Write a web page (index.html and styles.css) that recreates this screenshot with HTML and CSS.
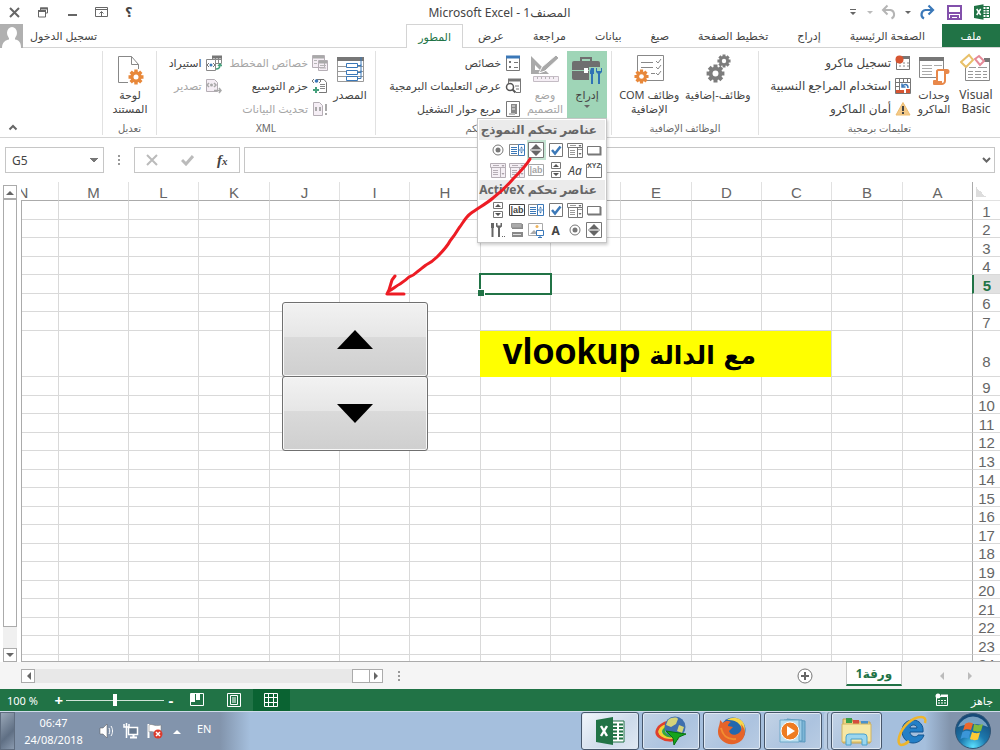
FILE: index.html
```
<!DOCTYPE html>
<html lang="ar" dir="rtl">

<head>
    <meta charset="utf-8">
    <title>المصنف1 - Microsoft Excel</title>
    <link rel="stylesheet" href="styles.css">
</head>

<body>
    <!-- shared icons for the controls menu -->
    <svg class="defs" width="0" height="0">
        <symbol id="i-button" viewBox="0 0 16 16"><path d="M1.500 4.500h13v8h-13z" fill="#fff" stroke="#777"/><path d="M2 12.500h12.500V5" fill="none" stroke="#777" stroke-width="2"/></symbol>
        <symbol id="i-combo" viewBox="0 0 16 16"><path d="M.5 1.500h15v4H.5zM1.500 5.500v10h9v-10M10.500 5.500h5v10h-5z" fill="#fff" stroke="#777"/><path d="M3 3.500h6M3 8.500h5M3 10.500h5M3 12.500h5M11 7.500h4" stroke="#999"/><path d="M11.500 3h3L13 5zM11.500 11h3L13 13z" fill="#666"/></symbol>
        <symbol id="i-check" viewBox="0 0 16 16"><path d="M1.500 1.500h13v13h-13z" fill="#fff" stroke="#777"/><path d="M4 8l3 3.500L12.500 4.500" fill="none" stroke="#3b78b8" stroke-width="2.500"/></symbol>
        <symbol id="i-spin" viewBox="0 0 16 16"><path d="M.500.500h15v15H.500zM2 8h12" fill="#fff" stroke="#777"/><path d="M3 7l5-5 5 5zM3 9l5 5 5-5z" fill="#666"/></symbol>
        <symbol id="i-list" viewBox="0 0 16 16"><path d="M.5 2.500h9v11h-9z" fill="#fff" stroke="#888"/><path d="M2 5.500h6M2 7.500h6M2 9.500h6M2 11.500h6" stroke="#3b78b8"/><path d="M9.500 2.500h6v11h-6zM10 8h5" fill="#fff" stroke="#3b78b8"/><path d="M11 6.500l1.500-2 1.500 2zM11 9.500l1.500 2 1.500-2z" fill="#3b78b8"/></symbol>
        <symbol id="i-radio" viewBox="0 0 16 16"><circle cx="8" cy="8" r="5" fill="#fff" stroke="#777"/><circle cx="8" cy="8" r="2.500" fill="#777"/></symbol>
        <symbol id="i-group" viewBox="0 0 16 16"><path d="M3 2.500H.5v13h15v-13H13" fill="none" stroke="#777"/><text x="8" y="6" font-size="7" font-weight="bold" text-anchor="middle" fill="#555">XYZ</text></symbol>
        <symbol id="i-scroll" viewBox="0 0 16 16"><path d="M3.500.5h9v6h-9zM3.500 9.500h9v6h-9z" fill="#fff" stroke="#777"/><path d="M5 5l3-3 3 3zM5 11l3 3 3-3z" fill="#555"/></symbol>
        <symbol id="i-text" viewBox="0 0 16 16"><path d="M.5 2.500h15v11H.5z" fill="#fff" stroke="currentColor"/><text x="8" y="11" font-size="9" font-weight="bold" text-anchor="middle" fill="currentColor">ab|</text></symbol>
        <symbol id="i-combo-off" viewBox="0 0 16 16"><path d="M.5 1.500h15v4H.5zM1.500 5.500v10h9v-10M10.500 5.500h5v10h-5z" fill="#f5f0f5" stroke="#b5aeb5"/><path d="M3 3.500h6M3 8.500h5M3 10.500h5M3 12.500h5" stroke="#b5aeb5"/><path d="M11.500 3h3L13 5zM11.500 11h3L13 13z" fill="#a8a0a8"/></symbol>
        <symbol id="i-toggle" viewBox="0 0 16 16"><path d="M3 2h11v5H3zM3 10h11v5H3z" fill="#888"/><path d="M2.500 1.500h10v4h-10z" fill="#aaa" stroke="#999"/><path d="M4 12.500h8" stroke="#ddd"/></symbol>
        <symbol id="i-image" viewBox="0 0 16 16"><path d="M.5 1.500h14v12H.5z" fill="#fff" stroke="#aaa"/><path d="M2 12l4-4 4 4z" fill="#aaa"/><circle cx="9" cy="4.500" r="1.500" fill="#efb45c"/><path d="M8.500 8.500h7v5h-7zM10 15.500h4M12 13v2" fill="#fff" stroke="#3b78b8"/></symbol>
        <symbol id="i-tools" viewBox="0 0 16 16"><path d="M1 1h3v5H3.500v9h-2V6H1z" fill="#666"/><path d="M6 1v3.500L8 6v9h2V6l2-1.500V1h-1.500v2.500h-3V1z" fill="#666"/><path d="M12 14.500h1M14 14.500h1" stroke="#666"/></symbol>
        <symbol id="i-gear" viewBox="0 0 16 16"><path d="M8 .5v15M.5 8h15M2.700 2.700l10.600 10.600M13.300 2.700L2.700 13.300" stroke="currentColor" stroke-width="3.400"/><circle cx="8" cy="8" r="5.700" fill="currentColor"/><circle cx="8" cy="8" r="2.500" fill="#fff"/></symbol>
    </svg>

    <header class="titlebar">
        <div class="quick">
            <button aria-label="Excel"><svg width="16" height="16" viewBox="0 0 16 16"><path d="M8.500 2.500h7v11h-7z" fill="#fff" stroke="#217346"/><path d="M9 5.500h6M9 8h6M9 10.500h6M12 3v10" stroke="#217346"/><path d="M0 2l9.500-1.800v15.600L0 14z" fill="#217346"/><path d="M2.700 5l4 6M6.700 5l-4 6" stroke="#fff" stroke-width="1.500"/></svg></button>
            <button aria-label="حفظ"><svg width="15" height="15" viewBox="0 0 15 15"><path d="M1 1h13v13H1z" fill="#fff" stroke="#8250ab" stroke-width="2"/><path d="M2 8h11M4 14v-3h7v3" fill="none" stroke="#8250ab" stroke-width="2"/></svg></button>
            <button aria-label="إعادة"><svg width="16" height="16" viewBox="0 0 16 16"><path d="M13 6H6.500a4.500 4.500 0 0 0-1.500 8.500" fill="none" stroke="#3b78b8" stroke-width="2.200"/><path d="M9.500 1.500L14 6l-4.500 4.500" fill="none" stroke="#3b78b8" stroke-width="2.200"/></svg></button>
            <span class="caret"></span>
            <button aria-label="تراجع"><svg width="16" height="16" viewBox="0 0 16 16"><path d="M3 6h6.500a4.500 4.500 0 0 1 1 8.500M6.500 1.500L2 6l4.500 4.500" fill="none" stroke="#b5b5b5" stroke-width="2"/></svg></button>
            <span class="caret off"></span>
            <svg class="more" width="6" height="7" viewBox="0 0 6 7"><path d="M0 0h6v1H0zM0 3h6L3 6z" fill="#666"/></svg>
        </div>
        <h1>المصنف1 - Microsoft Excel</h1>
        <div class="window-buttons">
            <button aria-label="تعليمات">؟</button>
            <button aria-label="خيارات عرض الشريط"><svg width="13" height="11" viewBox="0 0 13 11"><path d="M.5.5h12v9H.5zM1 2.500h11M6.500 9V5M4.500 6.500l2-2 2 2" fill="none" stroke="#666"/></svg></button>
            <button aria-label="تصغير"><svg width="12" height="11" viewBox="0 0 12 11"><path d="M2 8h9" stroke="#666" stroke-width="2"/></svg></button>
            <button aria-label="استعادة"><svg width="12" height="11" viewBox="0 0 12 11"><path d="M3.500 3V1h7v5h-2M1.500 4h7v6h-7z" fill="none" stroke="#666"/><path d="M1 4h8M3 1.500h8" stroke="#666" stroke-width="2"/></svg></button>
            <button aria-label="إغلاق"><svg width="11" height="11" viewBox="0 0 11 11"><path d="M1 1l9 9M10 1l-9 9" stroke="#666" stroke-width="2"/></svg></button>
        </div>
    </header>

    <nav class="tabs">
        <a class="file" href="#">ملف</a>
        <a href="#">الصفحة الرئيسية</a>
        <a href="#">إدراج</a>
        <a href="#">تخطيط الصفحة</a>
        <a href="#">صيغ</a>
        <a href="#">بيانات</a>
        <a href="#">مراجعة</a>
        <a href="#">عرض</a>
        <a class="active" href="#">المطور</a>
        <a class="signin" href="#">تسجيل الدخول</a>
        <svg class="avatar" width="23" height="24" viewBox="0 0 23 24"><path d="M0 0h23v24H0z" fill="#b0b0b0"/><path d="M2 24c0-6 4-8 7-8.500L9 14h6v1.500c4 .5 6 3 6 8.500z" fill="#fff"/><ellipse cx="12" cy="9" rx="5" ry="6" fill="#fff"/></svg>
    </nav>

    <div class="ribbon">
        <section class="group code">
            <div class="tools">
                <button class="big"><svg width="32" height="32" viewBox="0 0 32 32"><path d="M5.500 11v16.500h24V6.500H26" fill="#fff" stroke="#888"/><path d="M24 5h6v4h-6z" fill="#777"/><path d="M9 14.500h7M18 14.500h9M8 18.500h5M15 18.500h6M23 18.500h4M8 21.500h5M15 21.500h6M23 21.500h4M8 24.500h5M15 24.500h6M23 24.500h4" stroke="#999"/><path d="M1 9l8-7 4 5-7 7z" fill="#fff" stroke="#e8c069" stroke-width="2"/><path d="M15 6l4-3 5 5-4 4z" fill="#fff" stroke="#e58a98" stroke-width="2"/></svg><span>Visual<br>Basic</span></button>
                <button class="big"><svg width="32" height="32" viewBox="0 0 32 32"><path d="M1.500 4.500h24v20h-24z" fill="#fff" stroke="#888"/><path d="M1 4h25v4H1z" fill="#777"/><path d="M4 12.500h10M16 12.500h8M4 15.500h10M4 18.500h10M4 21.500h10" stroke="#aaa"/><path d="M20 17h9c2 0 2 3 0 3h-2v8c0 2-2 3-3 3h-8v-3h3V18z" fill="#fff" stroke="#e8884a" stroke-width="2" stroke-linejoin="round"/><path d="M17 28h7v2h-7zM26 17h4v3h-4z" fill="#e8884a"/></svg><span>وحدات<br>الماكرو</span></button>
                <div class="stack">
                    <button><svg width="16" height="16" viewBox="0 0 16 16"><path d="M1.500 2.500h13v12h-13z" fill="#fff" stroke="#777"/><path d="M7 2.500h8" stroke="#777" stroke-width="3"/><path d="M4 8h2M8 8h2M12 8h2M4 11h2M8 11h2M12 11h2" stroke="#888"/><circle cx="4.500" cy="4.500" r="4" fill="#d65532"/></svg>تسجيل ماكرو</button>
                    <button><svg width="16" height="16" viewBox="0 0 16 16"><path d="M.5.5h15v15H.5zM.5 4.500h15M4.500 0v16M8.500 0v4M12.500 0v4M0 8.500h4M0 12.500h4" fill="#fff" stroke="#777"/><path d="M1 12h4v3H1zM11 11h4v4h-4zM5 12h4v3H5z" fill="#d65532"/><path d="M7 9c2-4 6-3 6 1M7 5.500V9h3.500" fill="none" stroke="#3b78b8" stroke-width="1.500"/></svg>استخدام المراجع النسبية</button>
                    <button><svg width="16" height="16" viewBox="0 0 16 16"><path d="M8 1.500L15 14H1z" fill="#f3c988" stroke="#eebd70"/><path d="M8 5v5M8 11v2" stroke="#444" stroke-width="2"/></svg>أمان الماكرو</button>
                </div>
            </div>
            <h2>تعليمات برمجية</h2>
        </section>

        <section class="group addins">
            <div class="tools">
                <button class="big"><svg width="32" height="32" viewBox="0 0 32 32" color="#7d7d7d"><use href="#i-gear" x="15" y="1" width="14" height="14"/><use href="#i-gear" x="4" y="11" width="19" height="19"/></svg><span>وظائف-إضافية</span></button>
                <button class="big"><svg width="32" height="32" viewBox="0 0 32 32" color="#e8883a"><path d="M4.500 2.500h26v25h-26z" fill="#fff" stroke="#888"/><path d="M8 9.500h12M8 14.500h12M18 20.500h4" stroke="#888"/><path d="M23 8l2 2 3-4M23 14l2 2 3-4M23 20l2 2 3-4" fill="none" stroke="#888"/><use href="#i-gear" x="1" y="16" width="15" height="15"/></svg><span>وظائف COM<br>الإضافية</span></button>
            </div>
            <h2>الوظائف الإضافية</h2>
        </section>

        <section class="group controls">
            <div class="tools">
                <div class="insert">
                    <button class="big open"><svg width="32" height="32" viewBox="0 0 32 32"><path d="M10 8V5h10v3" fill="none" stroke="#6f6f6f" stroke-width="2"/><rect x="1" y="8" width="28" height="19" rx="2" fill="#6f6f6f"/><path d="M1 17.500h28" stroke="#9fd5b7"/><path d="M13 15h4v5h-4z" fill="#fff"/><path d="M18 14h14v18H18z" fill="#9fd5b7"/><path d="M20 15h3v6h-1v10h-2V21h-1v-3z" fill="#2f72b5"/><path d="M25 15v4l2 2v10h2V21l2-2v-4h-1v3h-4v-3z" fill="#2f72b5"/></svg><span>إدراج</span><i class="caret"></i></button>
                    <div class="menu">
                        <h3>عناصر تحكم النموذج</h3>
                        <div class="icons">
                            <button aria-label="زر"><svg><use href="#i-button"/></svg></button>
                            <button aria-label="مربع تحرير وسرد"><svg><use href="#i-combo"/></svg></button>
                            <button aria-label="خانة اختيار"><svg><use href="#i-check"/></svg></button>
                            <button class="picked" aria-label="زر زيادة ونقصان"><svg><use href="#i-spin"/></svg></button>
                            <button aria-label="مربع قائمة"><svg><use href="#i-list"/></svg></button>
                            <button aria-label="زر خيار"><svg><use href="#i-radio"/></svg></button>
                            <button aria-label="مربع مجموعة"><svg><use href="#i-group"/></svg></button>
                            <button class="label" aria-label="تسمية">Aa</button>
                            <button aria-label="شريط تمرير"><svg><use href="#i-scroll"/></svg></button>
                            <button class="off" aria-label="حقل نص"><svg><use href="#i-text"/></svg></button>
                            <button aria-label="قائمة"><svg><use href="#i-combo-off"/></svg></button>
                            <button aria-label="قائمة منسدلة"><svg><use href="#i-combo-off"/></svg></button>
                        </div>
                        <h3>عناصر تحكم ActiveX</h3>
                        <div class="icons">
                            <button aria-label="زر أمر"><svg><use href="#i-button"/></svg></button>
                            <button aria-label="مربع تحرير وسرد"><svg><use href="#i-combo"/></svg></button>
                            <button aria-label="خانة اختيار"><svg><use href="#i-check"/></svg></button>
                            <button aria-label="مربع قائمة"><svg><use href="#i-list"/></svg></button>
                            <button aria-label="مربع نص"><svg><use href="#i-text"/></svg></button>
                            <button aria-label="شريط تمرير"><svg><use href="#i-scroll"/></svg></button>
                            <button aria-label="زر زيادة ونقصان"><svg><use href="#i-spin"/></svg></button>
                            <button aria-label="زر خيار"><svg><use href="#i-radio"/></svg></button>
                            <button class="letter" aria-label="تسمية">A</button>
                            <button aria-label="صورة"><svg><use href="#i-image"/></svg></button>
                            <button aria-label="زر تبديل"><svg><use href="#i-toggle"/></svg></button>
                            <button aria-label="المزيد"><svg><use href="#i-tools"/></svg></button>
                        </div>
                    </div>
                </div>
                <button class="big design off"><svg width="32" height="32" viewBox="0 0 32 32"><path d="M2 3v18h18zM6 12l5 5H6z" fill="#a9a9a9" fill-rule="evenodd"/><path d="M10 20l3-6L27 2l3 3-14 13z" fill="#a9a9a9" stroke="#fff"/><path d="M4.500 23.500h25v5h-25z" fill="#f5eef5" stroke="#c4bcc4"/><path d="M8.500 24v2M12.500 24v2M16.500 24v2M20.500 24v2M24.500 24v2" stroke="#b5b5b5"/></svg><span>وضع<br>التصميم</span></button>
                <div class="stack">
                    <button><svg width="16" height="16" viewBox="0 0 16 16"><path d="M1.500 1.500h13v14h-13z" fill="#fff" stroke="#777"/><path d="M1 2h14" stroke="#3b78b8" stroke-width="3"/><path d="M4 6h2v2H4zM4 11h2v2H4z" fill="#777"/><path d="M9 7.500h4M9 12.500h4" stroke="#777"/></svg>خصائص</button>
                    <button><svg width="16" height="16" viewBox="0 0 16 16"><path d="M3.500 5V1.500h12v13H11" fill="#fff" stroke="#777"/><path d="M3 2h13" stroke="#777" stroke-width="3"/><path d="M10 8h4M11 11h3" stroke="#777"/><circle cx="5" cy="9" r="3.500" fill="#fff" stroke="#555" stroke-width="1.500"/><path d="M7.500 11.500l3 3" stroke="#555" stroke-width="2"/></svg>عرض التعليمات البرمجية</button>
                    <button><svg width="16" height="16" viewBox="0 0 16 16"><path d="M1.500.5h13v15h-13z" fill="#fff" stroke="#777"/><path d="M6 3h6v10H6z" fill="#888"/><path d="M4 13h6M7 5h3M7 8h3" stroke="#bbb" stroke-width="2"/></svg>مربع حوار التشغيل</button>
                </div>
            </div>
            <h2>عناصر التحكم</h2>
        </section>

        <section class="group xml">
            <div class="tools">
                <button class="big"><svg width="32" height="32" viewBox="0 0 32 32"><path d="M3.500 4.500h26v24h-26zM3.500 13.500h26M3.500 18.500h26M3.500 23.500h26" fill="#fff" stroke="#999"/><path d="M3 4h27v4H3z" fill="#777"/><path d="M12.500 10.500h11v4h-11zM12.500 17.500h11v4h-11zM12.500 23.500h11v4h-11z" fill="#fff" stroke="#3b78b8"/><path d="M24 12.500h3V4M24 19.500h3v-8M24 25.500h3v-8" fill="none" stroke="#3b78b8"/></svg><span>المصدر</span></button>
                <div class="stack">
                    <button class="off"><svg width="16" height="16" viewBox="0 0 16 16"><path d="M.5.500h12v12H.5zM6.500 5.500h9v10h-9z" fill="#f5eef5" stroke="#b5aeb5"/><path d="M1 2h11M7 7h8" stroke="#a9a9a9" stroke-width="3"/><path d="M2 5.500h3M2 8.500h3M8 10.500h6M8 13h6" stroke="#b5b5b5"/></svg>خصائص المخطط</button>
                    <button><svg width="16" height="16" viewBox="0 0 16 16"><path d="M4.500 4V1.500H12l2.500 3v10H7" fill="#fff" stroke="#777"/><path d="M8 6.500h5M8 8.500h5M8 10.500h5" stroke="#888"/><path d="M2 1L0 3l2 2M7 1l2 2-2 2" fill="none" stroke="#777"/><circle cx="4.500" cy="3" r="1.800" fill="#3b78b8"/><path d="M4 9v6M1 12h6" stroke="#45a07c" stroke-width="2"/></svg>حزم التوسيع</button>
                    <button class="off"><svg width="16" height="16" viewBox="0 0 16 16"><path d="M1.500 1.500h6l3 3v10h-9z" fill="#f5eef5" stroke="#b5aeb5"/><path d="M3 6h2v4H3zM7 6h2v4H7z" fill="#a9a9a9"/><path d="M14 3v7M14 12v2" stroke="#a9a9a9" stroke-width="2"/></svg>تحديث البيانات</button>
                </div>
                <div class="stack">
                    <button><svg width="16" height="16" viewBox="0 0 16 16"><path d="M6.500 1.500h9v7h-9zM7 4.500h8M9.500 2v6M12.500 2v6" fill="#fff" stroke="#888"/><path d="M6 2h10" stroke="#777" stroke-width="3"/><path d="M.5 4.500h9v11h-9z" fill="#fff" stroke="#888"/><path d="M3 8l-2 2 2 2M7 8l2 2-2 2" fill="none" stroke="#777"/><circle cx="5" cy="10" r="1.500" fill="#3b78b8"/><path d="M10 14c3 0 4-1 4-4M12 11l2-2 2 2" fill="none" stroke="#45a07c" stroke-width="1.500"/></svg>استيراد</button>
                    <button class="off"><svg width="16" height="16" viewBox="0 0 16 16"><path d="M.5 1.500h8l3 3v9H.5z" fill="#f5eef5" stroke="#b5aeb5"/><path d="M3 5L1 7l2 2M8 5l2 2-2 2M8 12.500h7M13 10l2 2.500-2 2.500" fill="none" stroke="#a9a9a9" stroke-width="1.500"/><circle cx="5.500" cy="7" r="1.500" fill="#a9a9a9"/></svg>تصدير</button>
                </div>
            </div>
            <h2>XML</h2>
        </section>

        <section class="group modify">
            <div class="tools">
                <button class="big"><svg width="32" height="32" viewBox="0 0 32 32" color="#e8883a"><path d="M4.500 3.500h13l7 8v18h-20z" fill="#fff"/><path d="M14 29.500H4.500v-26h13l7 8V16M17.500 3.500v8h7" fill="none" stroke="#888"/><use href="#i-gear" x="14" y="16" width="16" height="16"/></svg><span>لوحة<br>المستند</span></button>
            </div>
            <h2>تعديل</h2>
        </section>

        <button class="collapse" aria-label="طي الشريط"><svg width="10" height="7" viewBox="0 0 10 7"><path d="M1.500 5.500L5 2l3.500 3.500" fill="none" stroke="#666" stroke-width="2"/></svg></button>
    </div>

    <div class="formula-bar" dir="ltr">
        <select class="name-box" aria-label="مربع الاسم">
            <option>G5</option>
        </select>
        <span class="dots"></span>
        <div class="fx">
            <button aria-label="إلغاء"><svg width="12" height="12" viewBox="0 0 12 12"><path d="M1 1l10 10M11 1L1 11" stroke="#bbb" stroke-width="2"/></svg></button>
            <button aria-label="إدخال"><svg width="13" height="12" viewBox="0 0 13 12"><path d="M1 6l4 4 7-8" fill="none" stroke="#bbb" stroke-width="3"/></svg></button>
            <button class="fn" aria-label="إدراج دالة">f<small>x</small></button>
        </div>
        <div class="formula">
            <input type="text" aria-label="شريط الصيغة">
            <svg width="9" height="7" viewBox="0 0 9 7"><path d="M1 1l3.500 3.500L8 1" fill="none" stroke="#666" stroke-width="2"/></svg>
        </div>
    </div>

    <main class="sheet">
        <div class="cells">
            <table id="grid"></table>
            <div class="spinner">
                <button aria-label="زيادة"><svg width="36" height="19" viewBox="0 0 36 19"><path d="M0 19L18 0l18 19z"/></svg></button>
                <button aria-label="إنقاص"><svg width="36" height="19" viewBox="0 0 36 19"><path d="M0 0l18 19L36 0z"/></svg></button>
            </div>
        </div>
        <div class="vscroll">
            <button aria-label="لأعلى"><svg width="8" height="5" viewBox="0 0 8 5"><path d="M0 5l4-4 4 4z" fill="#666"/></svg></button>
            <div class="thumb"></div>
            <div class="track"></div>
            <button aria-label="لأسفل"><svg width="8" height="5" viewBox="0 0 8 5"><path d="M0 0l4 4 4-4z" fill="#666"/></svg></button>
        </div>
        <!-- hand-drawn arrow from the spin button icon -->
        <svg class="pointer" width="150" height="142" viewBox="0 0 150 142" fill="none" stroke="#ed1c24" stroke-width="3" stroke-linecap="round" stroke-linejoin="round"><path d="M146 2c-4 7-10 13-17 20-6 7-12 13-20 19-7 6-15 10-23 16-5 4-7 9-11 14-3 5-5 8-9 13-3 6-8 11-13 16-4 4-7 6-11 8-4 3-6 5-9 7-3 3-4 4-8 5-3 3-6 5-9 7-4 2-7 5-11 7M11 119l-3 4-3 10-2 4h17"/></svg>
    </main>

    <div class="sheet-bar">
        <div class="sheet-nav"><span class="next"></span><span class="prev"></span></div>
        <a class="sheet-tab" href="#">ورقة1</a>
        <button class="add" aria-label="ورقة جديدة"><svg width="16" height="16" viewBox="0 0 16 16"><circle cx="8" cy="8" r="7" fill="#fff" stroke="#777"/><path d="M8 4v8M4 8h8" stroke="#666" stroke-width="2"/></svg></button>
        <span class="dots"></span>
        <div class="hscroll">
            <button aria-label="يمين"><svg width="5" height="8" viewBox="0 0 5 8"><path d="M0 0l4 4-4 4z" fill="#666"/></svg></button>
            <div class="thumb"></div>
            <div class="track"></div>
            <button aria-label="يسار"><svg width="5" height="8" viewBox="0 0 5 8"><path d="M5 0L1 4l4 4z" fill="#666"/></svg></button>
        </div>
    </div>

    <footer class="status">
        <span class="ready">جاهز</span>
        <svg width="14" height="14" viewBox="0 0 14 14"><path d="M1.500 3.500h11v9h-11z" fill="none" stroke="#fff"/><path d="M6 2.500h7" stroke="#fff" stroke-width="2"/><path d="M3 7.500h8M3 10h8" stroke="#fff" stroke-dasharray="2 1"/><circle cx="3" cy="3" r="2.500" fill="#fff"/></svg>
        <div class="views">
            <button class="on" aria-label="عادي"><svg width="14" height="14" viewBox="0 0 14 14"><path d="M.5.5h13v13H.5zM0 4.500h14M0 9.500h14M4.500 0v14M9.500 0v14" fill="none" stroke="#fff"/></svg></button>
            <button aria-label="تخطيط الصفحة"><svg width="14" height="14" viewBox="0 0 14 14"><path d="M.5.500h13v13H.5zM3.500 2.500h7v9h-7zM5 5h4M5 7h4M5 9h4" fill="none" stroke="#fff"/></svg></button>
            <button aria-label="معاينة فواصل الصفحات"><svg width="14" height="14" viewBox="0 0 14 14"><path d="M.5.500h13v12H.5z" fill="none" stroke="#fff"/><path d="M1 1h4v8H1zM6 1h4v6H6z" fill="#fff"/></svg></button>
        </div>
        <div class="zoom">
            <button aria-label="تصغير">-</button>
            <input type="range" min="0" max="100" value="50" aria-label="تكبير/تصغير">
            <button aria-label="تكبير">+</button>
        </div>
        <span class="percent" dir="ltr">100 %</span>
    </footer>

    <div class="taskbar" dir="ltr">
        <button class="peek" aria-label="إظهار سطح المكتب"></button>
        <div class="clock">06:47<br>24/08/2018</div>
        <div class="tray">
            <svg width="16" height="16" viewBox="0 0 16 16"><path d="M1 5h3l4-4v14l-4-4H1z" fill="#fff" stroke="#555" stroke-width=".5"/><path d="M10 5c1 2 1 4 0 6M12 3c2 3 2 7 0 10" fill="none" stroke="#fff"/></svg>
            <svg width="16" height="16" viewBox="0 0 16 16"><path d="M5.500 4.500h9v7h-9z" fill="#66788e" stroke="#fff" stroke-width="1.500"/><path d="M7 14.500h7M10.500 12v2" stroke="#fff" stroke-width="2"/><path d="M1 1v3h5V1M3.500 0v15" fill="none" stroke="#fff" stroke-width="1.500"/></svg>
            <svg width="16" height="16" viewBox="0 0 16 16"><path d="M1.500 1v14" stroke="#fff" stroke-width="2"/><path d="M2 2c3-2 5 2 12 0v7c-6 2-9-2-12 0z" fill="#fff" stroke="#777" stroke-width=".5"/><circle cx="11" cy="11" r="4.500" fill="#dc3b2c"/><path d="M9 9l4 4M13 9l-4 4" stroke="#fff" stroke-width="1.500"/></svg>
            <svg width="12" height="5" viewBox="0 0 12 5"><path d="M2 5l4-4 4 4z" fill="#fff"/></svg>
        </div>
        <span class="lang">EN</span>
        <div class="apps">
            <button class="app front" aria-label="Excel"><svg width="30" height="30" viewBox="0 0 30 30"><path d="M15 5h14v21H15z" fill="#fff" stroke="#217346"/><path d="M18 8.500h4M24 8.500h4M18 12h4M24 12h4M18 15.500h4M24 15.500h4M18 19h4M24 19h4M18 22.500h4M24 22.500h4" stroke="#217346" stroke-width="2"/><path d="M1 4l17-3v28L1 26z" fill="#217346"/><path d="M6 10l6 10M12 10L6 20" stroke="#fff" stroke-width="2.400"/></svg></button>
            <button class="app" aria-label="Download Manager"><svg width="32" height="30" viewBox="0 0 32 30"><path d="M14 6C2 9-1 17 5 21s13 4 18 1" fill="none" stroke="#e0402c" stroke-width="3"/><path d="M14 9C5 11 3 16 7 19s11 3 15 1" fill="none" stroke="#f3d231" stroke-width="3"/><path d="M14 11c-5 2-7 4-4 7s8 2 11 1" fill="none" stroke="#35a63b" stroke-width="3"/><circle cx="20" cy="11" r="10.500" fill="#3f6fae"/><path d="M13 4c4-3 9-3 10-1l-2 5-5 3-5-2zM24 9l5 2-2 6-5-2z" fill="#d4d37a"/><path d="M11 15l20 3-7 3-5 8-1-7z" fill="#16a51e" stroke="#08700f"/></svg></button>
            <button class="app" aria-label="Firefox"><svg width="30" height="30" viewBox="0 0 30 30"><circle cx="16" cy="14" r="12.500" fill="#2468ae"/><path d="M10 4c5-4 14-3 17 4 3 8-2 18-11 19 9-4 11-13 7-18-3-4-7-5-13-5z" fill="#f7d64a"/><path d="M3 4l3 3c3-3 6-2 8-1-2 1-3 2-3 4l5 1-4 4c1 4 6 5 10 2 3-2 3-6 2-9 5 5 5 11 1 16C15 33 1 26 1 16 1 11 3 9 3 4z" fill="#e56329"/><path d="M4 12c2 8 6 12 15 11" fill="none" stroke="#f28d31" stroke-width="2"/></svg></button>
            <button class="app" aria-label="Media Player"><svg width="30" height="28" viewBox="0 0 30 28"><path d="M9 2l18 2v21l-18-1z" fill="#7db5d6" stroke="#5897bd"/><path d="M6 3h18v21H6z" fill="#9ccbe5" stroke="#5897bd"/><path d="M2 3h19v22H2z" fill="#bcdff0" stroke="#6fa9c9"/><circle cx="12" cy="14" r="9" fill="#ee7c22" stroke="#fff"/><path d="M9 9l8 5-8 5z" fill="#fff"/></svg></button>
            <button class="app stacked" aria-label="Explorer"><svg width="34" height="30" viewBox="0 0 34 30"><path d="M3 3h9l1 3h17v21H3z" fill="#eed685" stroke="#c3a04c"/><path d="M6 2h6v5H6z" fill="#3b9f48"/><path d="M13 4h6v4h-6z" fill="#d64c3c"/><path d="M21 5h7v4h-7z" fill="#4a91cc"/><path d="M2 8h29v18H2z" fill="#f6e7a5" stroke="#d2b461"/><path d="M6 29v-8q0-3 3-3h15q3 0 3 3v8h-5v-6H11v6z" fill="#9bd6ee" stroke="#4aa1cd"/></svg></button>
            <button class="pinned" aria-label="Internet Explorer"><svg width="34" height="32" viewBox="0 0 34 32"><path d="M27 17H14c0 5 7 6 8 3h6c-2 6-7 8-11 8C11 28 6 23 6 16S11 5 17 5s11 5 10 12zM14 13h7c0-4-7-4-7 0z" fill="#237fc7" stroke="#135590"/><path d="M29 8C32 0 21 0 12 8S0 29 5 30c2 0 5-1 8-4" fill="none" stroke="#eeb52c" stroke-width="2.500"/></svg></button>
        </div>
        <button class="start" aria-label="Start"><svg width="38" height="38" viewBox="0 0 38 38"><defs><radialGradient id="orb" cx="50%" cy="95%" r="85%"><stop offset="0" stop-color="#5be0ff"/><stop offset=".45" stop-color="#1c79ae"/><stop offset="1" stop-color="#174a78"/></radialGradient></defs><circle cx="19" cy="19" r="17.500" fill="url(#orb)" stroke="#315576"/><path d="M4 15a16 16 0 0 1 30 0c-9-4-20-4-30 0z" fill="#a9cbe3" opacity=".65"/><path d="M11 12c3-2 5-2 8-.5L17 18c-3-1-5-1-8 .5z" fill="#ec682b"/><path d="M20 12c3 1.500 5 1.500 9 0l-2 7c-3 1-5 1-8-.5z" fill="#83b93c"/><path d="M8.500 20c3-1.500 5-1.500 8-.5l-2 7c-3-1-5-1-8 .5z" fill="#3b96d8"/><path d="M18 20c3 1.500 5 1.500 8 .5l-2 7c-3 1-5 1-8-.5z" fill="#fcca35"/></svg></button>
    </div>

    <script>
        const columns = 'ABCDEFGHIJKLMN'.split('');
        const rowCount = 24;
        const grid = document.getElementById('grid');

        // Header row
        const head = grid.createTHead().insertRow();
        head.innerHTML = '<th class="corner" aria-label="تحديد الكل"></th>' +
            columns.map(c => `<th scope="col">${c}</th>`).join('');

        // Cells
        const body = grid.createTBody();
        for (let r = 1; r <= rowCount; r++) {
            const row = body.insertRow();
            let html = `<th scope="row">${r}</th>`;
            for (let i = 0; i < columns.length; i++) {
                if (r === 8 && columns[i] === 'C') {
                    html += '<td class="note" colspan="5"><div>مع الدالة <b>vlookup</b></div></td>';
                    i += 4;
                } else if (r === 5 && columns[i] === 'G') {
                    html += '<td class="selected"></td>';
                } else {
                    html += '<td></td>';
                }
            }
            row.innerHTML = html;
            if (r === 5) row.className = 'current';
            if (r === 8) row.className = 'tall';
        }
    </script>
</body>

</html>
```
FILE: styles.css
```
* {
    box-sizing: border-box;
}

body {
    display: flex;
    flex-direction: column;
    height: 100vh;
    margin: 0;
    overflow: hidden;
    background: #fff;
    color: #444;
    font-family: "Noto Sans", "DejaVu Sans", sans-serif;
    font-size: 11px;
}

h1, h2, h3 {
    margin: 0;
    font-weight: normal;
}

button {
    padding: 0;
    border: 0;
    background: none;
    color: inherit;
    font: inherit;
}

a {
    color: inherit;
    text-decoration: none;
}

svg {
    flex: none;
    display: block;
}

.defs {
    display: none;
}

.caret {
    border: 3px solid transparent;
    border-top-color: #666;
    border-bottom: 0;
}

.dots {
    width: 2px;
    height: 10px;
    background: repeating-linear-gradient(#999 0 2px, transparent 2px 4px);
}

/* Title bar */
.titlebar {
    flex: none;
    display: grid;
    grid-template-columns: 1fr auto 1fr;
    align-items: center;
    height: 24px;
    padding: 0 10px 0 9px;
}

.titlebar h1 {
    font-size: 12px;
}

.quick {
    display: flex;
    align-items: center;
    gap: 12px;
}

.quick .caret {
    margin: 0 -4px;
}

.quick .caret.off {
    border-top-color: #bbb;
}

.quick .more {
    margin-right: 3px;
}

.window-buttons {
    display: flex;
    justify-content: flex-end;
    align-items: center;
    gap: 17px;
    font-size: 13px;
    font-weight: bold;
}

/* Ribbon tabs */
.tabs {
    flex: none;
    display: flex;
    height: 24px;
    border-bottom: 1px solid #d4d4d4;
    line-height: 24px;
}

.tabs a {
    padding: 0 14px 0 15px;
    white-space: nowrap;
}

.tabs .file {
    width: 58px;
    margin-left: 3px;
    padding: 0;
    background: #217346;
    color: #fff;
    text-align: center;
}

.tabs .active {
    height: 24px;
    padding: 0 11px;
    border: 1px solid #d4d4d4;
    border-bottom: 0;
    background: #fff;
    color: #217346;
}

.tabs .signin {
    margin-right: auto;
    padding: 0 7px;
}

/* Ribbon */
.ribbon {
    position: relative;
    z-index: 2;
    flex: none;
    display: flex;
    height: 90px;
    padding: 3px 0 2px;
    border-bottom: 1px solid #d4d4d4;
}

.group {
    flex: none;
    display: flex;
    flex-direction: column;
    justify-content: space-between;
    border-left: 1px solid #e1e1e1;
}

.group h2 {
    color: #666;
    font-size: 10px;
    line-height: 14px;
    text-align: center;
}

.code {
    width: 242px;
}

.addins {
    width: 147px;
}

.controls {
    width: 236px;
}

.xml {
    width: 219px;
}

.modify {
    width: 54px;
}

.tools {
    display: flex;
    padding: 0 3px;
}

.addins .tools {
    padding-right: 6px;
}

.controls .tools {
    padding-right: 4px;
}

.big {
    display: flex;
    flex-direction: column;
    align-items: center;
    width: 40px;
    height: 68px;
    padding-top: 2px;
    line-height: 14px;
    white-space: nowrap;
}

.big span {
    margin-top: 3px;
}

.code .big {
    width: 42px;
}

.code .big:first-child span {
    font-size: 12px;
}

.addins .big {
    width: 70px;
}

.design, .xml .big {
    width: 44px;
}

.modify .big {
    width: 46px;
}

.open {
    background: #9fd5b7;
}

.open .caret {
    margin-top: 3px;
}

.off {
    color: #a6a6a6;
}

.stack {
    padding-right: 2px;
}

.stack button {
    display: flex;
    align-items: center;
    gap: 4px;
    height: 23px;
    white-space: nowrap;
}

.code .stack {
    font-size: 12px;
}

.xml .stack {
    padding-right: 0;
}

.xml .stack + .stack {
    padding-right: 8px;
}

.collapse {
    margin-right: auto;
    align-self: flex-end;
    padding: 0 0 4px 8px;
}

/* Controls menu */
.insert {
    position: relative;
}

.menu {
    position: absolute;
    top: 67px;
    right: 0;
    width: 130px;
    padding: 1px 1px 2px;
    border: 1px solid #c6c6c6;
    background: #fff;
    box-shadow: 1px 2px 3px rgba(0, 0, 0, 0.2);
}

.menu h3 {
    padding: 0 8px;
    background: #ebebeb;
    color: #666;
    font-size: 12px;
    font-weight: bold;
    line-height: 20px;
    white-space: nowrap;
}

.icons {
    display: grid;
    grid-template-columns: repeat(6, 1fr);
    padding: 0 1px 0 9px;
}

.icons button {
    display: flex;
    align-items: center;
    justify-content: center;
    height: 20px;
}

.icons svg {
    width: 16px;
    height: 16px;
    font-family: "Liberation Sans", sans-serif;
}

.icons .picked {
    background: #c4e4d2;
}

.icons .label {
    font-size: 12px;
    font-style: italic;
}

.icons .letter {
    font-size: 12px;
    font-weight: bold;
}

/* Formula bar */
.formula-bar {
    flex: none;
    display: flex;
    align-items: center;
    height: 44px;
    padding: 0 5px;
}

.name-box, .fx, .formula {
    height: 26px;
    border: 1px solid #c6c6c6;
    background: #fff;
}

.name-box {
    width: 99px;
    padding: 0 6px;
    border-radius: 0;
    appearance: none;
    background: conic-gradient(from -45deg at 50% 100%, #777 90deg, transparent 0) right 5px top 10px / 8px 4px no-repeat;
    color: #444;
    font: 12px "Noto Sans", sans-serif;
}

.formula-bar .dots {
    margin: 0 14px;
}

.fx {
    display: flex;
    align-items: center;
    justify-content: space-around;
    width: 106px;
    margin-right: 4px;
}

.fn {
    font: italic bold 15px "Liberation Serif", serif;
}

.fn small {
    font-size: 11px;
}

.formula {
    flex: 1;
    display: flex;
    align-items: center;
    padding-right: 3px;
}

.formula input {
    flex: 1;
    height: 24px;
    border: 0;
    outline: 0;
}

/* Sheet */
.sheet {
    position: relative;
    flex: 1;
    display: flex;
    min-height: 0;
}

.cells {
    position: relative;
    flex: 1;
    overflow: hidden;
    border-bottom: 1px solid #ababab;
}

.cells::after {
    content: "";
    position: absolute;
    top: 18px;
    bottom: 0;
    left: 0;
    border-left: 1px solid #ababab;
}

#grid {
    width: 1012px;
    border-collapse: separate;
    border-spacing: 0;
    table-layout: fixed;
}

#grid th {
    padding: 0;
    border-bottom: 1px solid #d9d9d9;
    color: #666;
    font: 15px/1 "Liberation Sans", sans-serif;
}

#grid thead th {
    width: 70px;
    height: 19px;
    border-bottom-color: #ababab;
    border-left: 1px solid #e1e1e1;
    vertical-align: bottom;
}

#grid thead th:nth-child(3n) {
    width: 71px;
}

#grid thead .corner {
    width: 28px;
    border-bottom-color: #e1e1e1;
    border-left-color: #ababab;
    background: linear-gradient(to top right, #ddd 50%, transparent 50%) 3px 5px / 10px 10px no-repeat;
}

#grid tbody tr {
    height: 18px;
}

#grid tbody tr:nth-child(odd) {
    height: 19px;
}

#grid tbody .tall {
    height: 46px;
}

#grid tbody th {
    border-left: 1px solid #ababab;
    vertical-align: bottom;
}

#grid .tall th {
    padding-bottom: 7px;
}

#grid td {
    padding: 0;
    border-bottom: 1px solid #d9d9d9;
    border-left: 1px solid #d9d9d9;
}

#grid .current th {
    border-left: 2px solid #217346;
    background: #e1e1e1;
    color: #217346;
    font-weight: bold;
}

#grid .selected {
    position: relative;
}

.selected::before {
    content: "";
    position: absolute;
    inset: -2px;
    border: 2px solid #217346;
}

.selected::after {
    content: "";
    position: absolute;
    bottom: -3px;
    left: -3px;
    width: 6px;
    height: 6px;
    border: solid #fff;
    border-width: 1px 1px 0 0;
    background: #217346;
}

#grid .note {
    padding-right: 75px;
    border-color: #ff0;
    background: #ff0;
    color: #000;
    font: bold 25px "DejaVu Sans", sans-serif;
}

.note div {
    height: 45px;
    line-height: 45px;
    white-space: nowrap;
}

.note b {
    font: bold 36px "Liberation Sans", sans-serif;
}

.spinner {
    position: absolute;
    top: 120px;
    right: 572px;
    width: 146px;
}

.spinner button {
    display: flex;
    align-items: center;
    justify-content: center;
    width: 100%;
    height: 75px;
    border: 1px solid #707070;
    border-radius: 3px;
    box-shadow: inset 0 0 0 1px #f8f8f8;
    background: linear-gradient(#f2f2f2, #e6e6e6 46%, #dadada 46%, #cfcfcf);
}

.spinner button + button {
    margin-top: -1px;
}

.pointer {
    position: absolute;
    top: -25px;
    right: 466px;
    z-index: 3;
    pointer-events: none;
}

.vscroll {
    display: flex;
    flex-direction: column;
    width: 21px;
    padding: 3px 4px 0 3px;
}

.vscroll button, .hscroll button {
    flex: none;
    display: flex;
    align-items: center;
    justify-content: center;
    width: 14px;
    height: 14px;
    border: 1px solid #ababab;
    background: #fff;
}

.thumb {
    border: 1px solid #ababab;
    background: #fff;
}

.vscroll .thumb {
    flex: 20;
}

.track {
    flex: 1;
    background: #f0f0f0;
}

/* Sheet tabs */
.sheet-bar {
    flex: none;
    display: flex;
    height: 27px;
    padding-left: 21px;
    align-items: center;
    background: #f5f5f5;
}

.sheet-nav {
    display: flex;
    justify-content: space-between;
    width: 98px;
    padding: 0 28px 0 38px;
}

.sheet-nav span {
    border: 4px solid transparent;
}

.sheet-nav .next {
    border-left-color: #bbb;
    border-right: 0;
}

.sheet-nav .prev {
    border-right-color: #bbb;
    border-left: 0;
}

.sheet-tab {
    width: 56px;
    height: 24px;
    align-self: flex-start;
    border: solid #c6c6c6;
    border-width: 0 1px;
    border-bottom: 2px solid #217346;
    background: #fff;
    color: #217346;
    font-size: 12px;
    font-weight: bold;
    line-height: 24px;
    text-align: center;
}

.sheet-bar .add {
    margin-right: 33px;
}

.sheet-bar .dots {
    margin: 0 auto 0 15px;
}

.hscroll {
    display: flex;
    width: 362px;
}

.hscroll .thumb {
    width: 17px;
    border-right: 0;
}

.hscroll .track {
    background: #e8e8e8;
}

/* Status bar */
.status {
    flex: none;
    display: flex;
    align-items: center;
    height: 22px;
    padding: 0 7px;
    background: #217346;
    color: #fff;
}

.ready {
    margin-left: 22px;
}

.views {
    display: flex;
    margin-right: auto;
}

.views button {
    display: flex;
    align-items: center;
    justify-content: center;
    width: 37px;
    height: 22px;
}

.views .on {
    background: #0a6332;
}

.zoom {
    display: flex;
    align-items: center;
    gap: 2px;
    margin: 0 3px 0 16px;
}

.zoom button {
    width: 10px;
    font-size: 15px;
    font-weight: bold;
    line-height: 20px;
}

.zoom input {
    width: 98px;
    height: 12px;
    margin: 0;
    appearance: none;
    background: linear-gradient(#cfe3d7, #cfe3d7) center / 100% 1px no-repeat;
}

.zoom input::-webkit-slider-thumb {
    width: 4px;
    height: 12px;
    appearance: none;
    background: #fff;
}

/* Taskbar */
.taskbar {
    flex: none;
    display: flex;
    align-items: center;
    height: 39px;
    border-top: 1px solid #cfdcea;
    background: linear-gradient(to right, #8294ac 0, #8294ac 220px, #a5bfdd 250px, #a5bfdd calc(100% - 75px), #8294ac calc(100% - 50px));
    color: #fff;
}

.peek {
    width: 15px;
    height: 38px;
    border: 1px solid #5f6d80;
    background: linear-gradient(135deg, #9aa8b8, #5f6f84 60%, #8b9bb0);
}

.clock {
    width: 77px;
    line-height: 17px;
    text-align: center;
}

.tray {
    display: flex;
    align-items: center;
    gap: 8px;
    padding: 0 14px 0 7px;
}

.lang {
    margin-top: -6px;
}

.apps {
    display: flex;
    gap: 3px;
    margin-left: auto;
}

.app, .pinned {
    display: flex;
    align-items: center;
    justify-content: center;
    width: 58px;
    height: 38px;
}

.app {
    border: 1px solid #46566b;
    border-radius: 3px;
    box-shadow: inset 0 0 0 1px #dfe9f4;
    background: linear-gradient(135deg, #c3d3e6, #acc3df 60%, #b9cce3);
}

.front {
    background: linear-gradient(135deg, #f1f5fa, #cddaea 60%, #e0e9f3);
}

.stacked {
    width: 51px;
    margin-left: 6px;
    box-shadow: inset 0 0 0 1px #dfe9f4, -3px 0 #b9cce3, -4px 0 #6d7f96, -7px 0 #b9cce3;
}

.pinned {
    width: 62px;
    margin-left: -3px;
}

.start {
    padding: 0 8px 0 10px;
}
```
